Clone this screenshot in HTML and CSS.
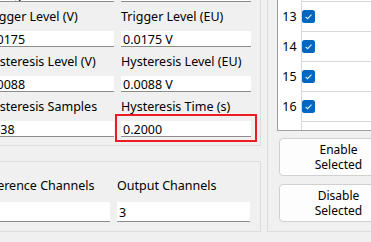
FILE: index.html
```html
<!DOCTYPE html>
<html lang="en">
<head>
  <meta charset="UTF-8" />
  <meta name="viewport" content="width=device-width, initial-scale=1.0" />
  <title>Trigger Settings</title>
  <link rel="stylesheet" href="styles.css">
</head>
<body>
  <div class="form">

    <div class="left-col">
      <!-- Trigger settings -->
      <div class="group trigger-group">
        <div class="field">
          <label>Trigger Mode</label>
          <input type="text" value="Rising" />
        </div>
        <div class="field">
          <label>Trigger Channel</label>
          <input type="text" value="1" />
        </div>
        <div class="field">
          <label>Trigger Level (V)</label>
          <input type="text" value="0.0175" />
        </div>
        <div class="field">
          <label>Trigger Level (EU)</label>
          <input type="text" value="0.0175 V" />
        </div>
        <div class="field">
          <label>Hysteresis Level (V)</label>
          <input type="text" value="0.0088" />
        </div>
        <div class="field">
          <label>Hysteresis Level (EU)</label>
          <input type="text" value="0.0088 V" />
        </div>
        <div class="field">
          <label>Hysteresis Samples</label>
          <input type="text" value="1638" />
        </div>
        <div class="field">
          <label>Hysteresis Time (s)</label>
          <div class="marked">
            <input type="text" value="0.2000" />
          </div>
        </div>
      </div>

      <!-- Channel counts -->
      <div class="group channel-group">
        <div class="field">
          <label>Reference Channels</label>
          <input type="text" value="1" />
        </div>
        <div class="field">
          <label>Output Channels</label>
          <input type="text" value="3" />
        </div>
      </div>
    </div>

    <div class="group select-group">
      <div class="grid">
        <div class="grid-row"><span class="row-head">12</span><span class="cell"><svg class="check" viewBox="0 0 13 13"><rect width="13" height="13" rx="2.5" fill="#0067c0"/><path d="M3.6 6.9 L5.6 8.7 L9.5 4.7" fill="none" stroke="#e6f0fa" stroke-width="1.1"/></svg></span></div>
        <div class="grid-row"><span class="row-head">13</span><span class="cell"><svg class="check" viewBox="0 0 13 13"><rect width="13" height="13" rx="2.5" fill="#0067c0"/><path d="M3.6 6.9 L5.6 8.7 L9.5 4.7" fill="none" stroke="#e6f0fa" stroke-width="1.1"/></svg></span></div>
        <div class="grid-row"><span class="row-head">14</span><span class="cell"><svg class="check" viewBox="0 0 13 13"><rect width="13" height="13" rx="2.5" fill="#0067c0"/><path d="M3.6 6.9 L5.6 8.7 L9.5 4.7" fill="none" stroke="#e6f0fa" stroke-width="1.1"/></svg></span></div>
        <div class="grid-row"><span class="row-head">15</span><span class="cell"><svg class="check" viewBox="0 0 13 13"><rect width="13" height="13" rx="2.5" fill="#0067c0"/><path d="M3.6 6.9 L5.6 8.7 L9.5 4.7" fill="none" stroke="#e6f0fa" stroke-width="1.1"/></svg></span></div>
        <div class="grid-row"><span class="row-head">16</span><span class="cell"><svg class="check" viewBox="0 0 13 13"><rect width="13" height="13" rx="2.5" fill="#0067c0"/><path d="M3.6 6.9 L5.6 8.7 L9.5 4.7" fill="none" stroke="#e6f0fa" stroke-width="1.1"/></svg></span></div>
        <div class="grid-row"><span class="row-head">17</span><span class="cell"></span></div>
      </div>

      <button class="btn">Enable<br>Selected</button>
      <button class="btn">Disable<br>Selected</button>
    </div>

  </div>
</body>
</html>
```

FILE: styles.css
```css
body, html {
  margin: 0;
  background: #f0f0f0;
  font-family: "Noto Sans", sans-serif;
  font-size: 12.5px;
  color: #000;
  overflow: hidden;
}

.form {
  display: flex;
  align-items: flex-start;
  gap: 6px;
  margin-top: -49px;
  margin-left: -60px;
}

.left-col {
  display: flex;
  flex-direction: column;
  gap: 15px;
  width: 321px;
  flex-shrink: 0;
}

.group {
  border: 1px solid #dcdcdc;
  box-sizing: border-box;
}

.trigger-group {
  display: grid;
  grid-template-columns: 130px 130px;
  justify-content: end;
  column-gap: 7px;
  row-gap: 7px;
  padding: 12px 9px 8px 0;
}

.field {
  display: flex;
  flex-direction: column;
  gap: 6px;
}

label {
  display: block;
  height: 16px;
  line-height: 16px;
  white-space: nowrap;
}

input[type="text"] {
  display: block;
  width: 100%;
  height: 16px;
  box-sizing: border-box;
  margin: 0;
  padding: 2px 2px 0;
  border: none;
  border-bottom: 1px solid #8c8c8c;
  background: #fff;
  font-family: inherit;
  font-size: 12.5px;
  color: #000;
  outline: none;
}

.marked {
  position: relative;
}

/* red annotation frame round the time field */
.marked::after {
  content: '';
  position: absolute;
  left: -6px;
  right: -6px;
  top: -7px;
  bottom: -5px;
  border: 2px solid #ec1c24;
}

.channel-group {
  display: grid;
  grid-template-columns: 132px 133px;
  justify-content: end;
  column-gap: 7px;
  padding: 16px 10px 8px 0;
  height: 71px;
}

.channel-group .field {
  gap: 8px;
}

.channel-group input[type="text"] {
  height: 20px;
  padding: 1px 2px 0;
}

.select-group {
  width: 160px;
  flex-shrink: 0;
  height: 281px;
  padding: 19px 0 9px 9px;
  display: flex;
  flex-direction: column;
  align-items: flex-start;
}

.grid {
  width: 200px;
  height: 160px;
  box-sizing: border-box;
  border: 1px solid #a0a0a0;
  background: #fff;
  overflow: hidden;
}

.grid-row {
  display: flex;
  height: 30px;
}

.row-head {
  width: 23px;
  line-height: 29px;
  text-align: center;
  border-right: 1px solid #d8d8d8;
}

.cell {
  flex: 1;
  height: 29px;
  border-bottom: 1px solid #d8d8d8;
  display: flex;
  align-items: center;
}

.check {
  width: 13px;
  height: 13px;
  display: block;
}

.btn {
  width: 119px;
  height: 38px;
  margin: 7px 0 0 2px;
  padding: 0;
  border: 1px solid #d0d0d0;
  border-radius: 4px;
  background: #fdfdfd;
  font-family: inherit;
  font-size: 12px;
  line-height: 15px;
  color: #000;
}

.btn + .btn {
  margin-top: 8px;
}
```
